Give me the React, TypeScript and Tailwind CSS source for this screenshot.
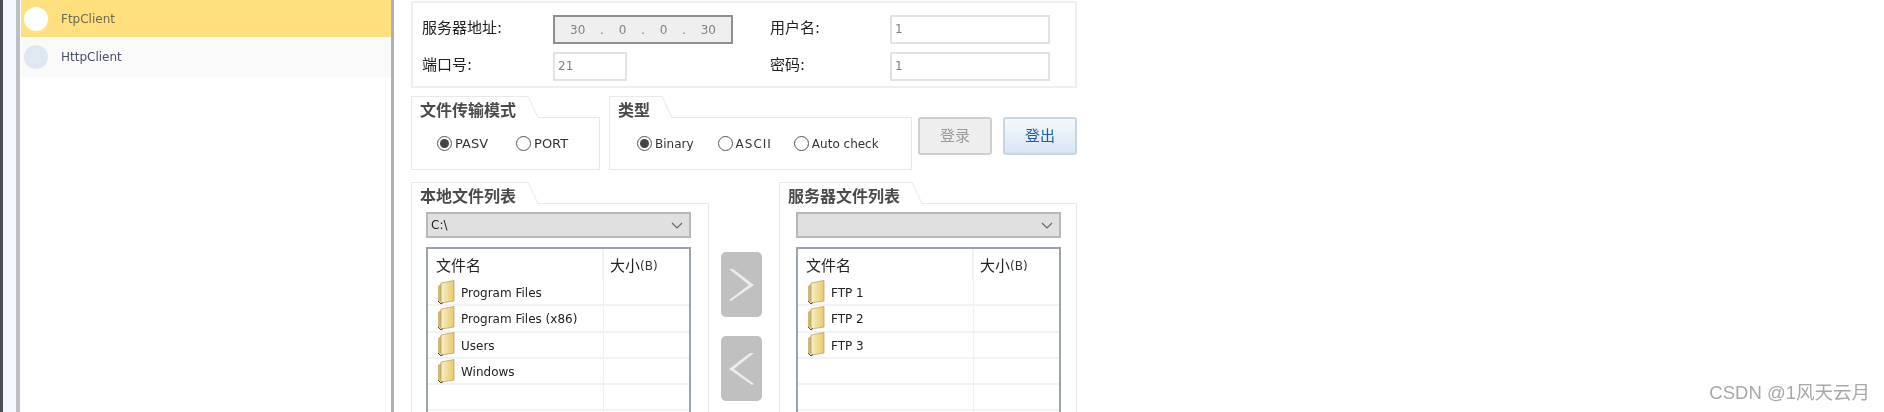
import type { ReactNode } from "react";

const font = "font-['DejaVu_Sans','Noto_Sans_CJK_SC',sans-serif]";

function Field({ w, children }: { w: string; children: ReactNode }) {
  return <div className={`${w} h-[29px] border-2 border-[#e2e2e2] bg-white pl-[3px] text-[12px] leading-[24px] text-[#808080]`}>{children}</div>;
}

function GroupBox({ title, tabWidth, className, bodyClass, children }: { title: string; tabWidth: string; className: string; bodyClass: string; children: ReactNode }) {
  return (
    <section className={`flex flex-col ${className}`}>
      <div className="flex h-[22px] shrink-0">
        <div className={`${tabWidth} whitespace-nowrap border-l border-t border-[#e8e8e8] pl-[8px] pt-[5px] text-[16px] leading-[18px] font-bold text-[#4a4a4a]`}>{title}</div>
        <svg width="15" height="22" viewBox="0 0 15 22" className="shrink-0"><path d="M0 .5 L3 .5 L13 21.5 L15 21.5" fill="none" stroke="#e8e8e8" /></svg>
        <div className="flex-1 border-b border-[#e8e8e8]" />
      </div>
      <div className={`flex-1 border-x border-b border-[#e8e8e8] ${bodyClass}`}>{children}</div>
    </section>
  );
}

function Radio({ label, on, gap, text = "text-[12px]" }: { label: string; on?: boolean; gap: string; text?: string }) {
  return (
    <div className={`flex items-center gap-[3px] ${gap}`}>
      <span className="flex h-[15px] w-[15px] items-center justify-center rounded-full border border-[#555] bg-white">
        {on && <span className="h-[9px] w-[9px] rounded-full bg-[#444]" />}
      </span>
      <span className={`${text} text-[#333]`}>{label}</span>
    </div>
  );
}

function Folder() {
  return (
    <svg width="18" height="25" viewBox="0 0 18 25" className="shrink-0">
      <defs>
        <linearGradient id="fg" x1="0" x2="1" y1="0" y2="0">
          <stop offset="0" stopColor="#f8efc4" />
          <stop offset="1" stopColor="#e9c96c" />
        </linearGradient>
      </defs>
      <path d="M1 21 V6 L4 4 V22 Z" fill="#cdb878" />
      <path d="M4 3 L17 0.5 V21 L4 23 Z" fill="url(#fg)" stroke="#b09a60" strokeWidth=".7" />
      <path d="M1 21 L4 24 L6 22.5" fill="none" stroke="#5a4a20" strokeWidth="1" />
    </svg>
  );
}

function FileList({ title, tabWidth, className, bodyClass, path, items }: { title: string; tabWidth: string; className: string; bodyClass: string; path: string; items: string[] }) {
  const rows = Array.from({ length: 6 }, (_, i) => items[i] ?? "");
  return (
    <GroupBox title={title} tabWidth={tabWidth} className={className} bodyClass={bodyClass}>
      <div className="flex h-[26px] items-center justify-between border-2 border-[#b8b8b8] bg-[#e0e0e0] pl-[3px] pr-[6px] text-[12px] text-[#222]">
        <span>{path}</span>
        <svg width="12" height="7" viewBox="0 0 12 7"><path d="M1 1 L6 6 L11 1" fill="none" stroke="#666" strokeWidth="1.2" /></svg>
      </div>
      <div className="mt-[9px] h-[200px] border-2 border-[#9aa3ab] bg-white">
        <div className="flex h-[31px] text-[15px] text-[#222]">
          <div className="flex w-[176px] items-center border-r-2 border-[#f0f0f0] pl-[8px] pt-[3px]">文件名</div>
          <div className="flex items-center pl-[6px] pt-[3px]">大小<span className="text-[12px] text-[#333]">(B)</span></div>
        </div>
        {rows.map((r, i) => (
          <div key={i} className="flex h-[26.3px] border-b-2 border-[#f2f2f2] text-[12px] text-[#222]">
            <div className="flex w-[176px] items-center gap-[6px] border-r border-[#f0f0f0] pl-[9px]">
              {r && <Folder />}
              <span className="pt-[2px]">{r}</span>
            </div>
          </div>
        ))}
      </div>
    </GroupBox>
  );
}

function Arrow({ dir }: { dir: "l" | "r" }) {
  return (
    <div className="flex h-[65px] w-[41px] items-center justify-center rounded-[5px] bg-[#c0c0c0]">
      <svg width="25" height="32" viewBox="0 0 25 32">
        <path d={dir === "r" ? "M0 0 L4 0 L25 16 L2 32 L0 31 L20 16 Z" : "M25 0 L21 0 L0 16 L23 32 L25 31 L5 16 Z"} fill="#ececec" />
      </svg>
    </div>
  );
}

export default function App() {
  return (
    <div className={`relative flex h-[412px] w-[1884px] overflow-hidden bg-white blur-[0.4px] ${font}`}>
      <aside className="flex h-full w-[394px] shrink-0 border-l-[3px] border-[#4a5058] bg-[#f5f9fe] pl-[13px]">
        <div className="h-full w-[378px] border-l-[4px] border-r-[3px] border-l-[#bcc0c4] border-r-[#adb2b8] bg-white pl-[1px]">
          <div className="flex h-[37px] items-center bg-[#ffdf7e] pl-[3px] text-[12px] text-[#6b6b55]">
            <span className="h-[24px] w-[24px] rounded-full bg-white" />
            <span className="ml-[13px]">FtpClient</span>
          </div>
          <div className="flex h-[40px] items-center bg-[#fafafa] pl-[3px] text-[12px] text-[#4a5068]">
            <span className="h-[24px] w-[24px] rounded-full bg-[#dfe8f2]" />
            <span className="ml-[13px]">HttpClient</span>
          </div>
        </div>
      </aside>

      <main className="flex w-[683px] flex-col pl-[17px] text-[#222]">
        <div className="mt-[1px] h-[87px] w-[666px] shrink-0 border-2 border-[#efefef] pl-[9px] pt-[12px] text-[15px]">
          <div className="grid grid-cols-[131px_180px_37px_120px_160px] grid-rows-[29px_29px] gap-y-[8px] items-center">
            <span className="pb-[3px]">服务器地址:</span>
            <div className="flex h-[29px] items-center justify-between border-2 border-[#8f8f8f] bg-[#efefef] px-[15px] text-[12px] text-[#808080]">
              <span>30</span><span>.</span><span>0</span><span>.</span><span>0</span><span>.</span><span>30</span>
            </div>
            <span />
            <span className="pb-[3px]">用户名:</span>
            <Field w="w-[160px]">1</Field>
            <span className="pb-[2px]">端口号:</span>
            <Field w="w-[74px]">21</Field>
            <span />
            <span className="pb-[2px]">密码:</span>
            <Field w="w-[160px]">1</Field>
          </div>
        </div>

        <div className="mt-[8px] flex h-[74px] w-[666px] shrink-0">
          <GroupBox title="文件传输模式" tabWidth="w-[114px]" className="w-[189px]" bodyClass="flex items-center">
            <Radio on label="PASV" gap="ml-[25px]" text="text-[13px]" />
            <Radio label="PORT" gap="ml-[28px]" text="text-[13px]" />
          </GroupBox>
          <GroupBox title="类型" tabWidth="w-[50px]" className="ml-[9px] w-[303px]" bodyClass="flex items-center">
            <Radio on label="Binary" gap="ml-[27px]" />
            <Radio label="ASCII" gap="ml-[24px]" text="text-[12px] tracking-[1px]" />
            <Radio label="Auto check" gap="ml-[22px]" />
          </GroupBox>
          <div className="ml-[6px] mt-[21px] flex h-[38px] gap-[11px] text-[15px]">
            <button className="w-[74px] rounded-[3px] border-2 border-[#cfcfcf] bg-[#eeeeee] text-[#9a9a9a]">登录</button>
            <button className="w-[74px] rounded-[3px] border-2 border-[#c8d6e4] bg-gradient-to-b from-[#f4f8fc] to-[#d8e6f4] text-[#1c5fa8]">登出</button>
          </div>
        </div>

        <div className="mt-[12px] flex h-[240px] w-[666px] shrink-0">
          <FileList title="本地文件列表" tabWidth="w-[114px]" className="w-[298px]" bodyClass="pl-[14px] pr-[17px] pt-[8px]" path="C:\" items={["Program Files", "Program Files (x86)", "Users", "Windows"]} />
          <div className="ml-[12px] mt-[70px] flex flex-col gap-[19px]">
            <Arrow dir="r" />
            <Arrow dir="l" />
          </div>
          <FileList title="服务器文件列表" tabWidth="w-[130px]" className="ml-[17px] w-[298px]" bodyClass="pl-[16px] pr-[15px] pt-[8px]" path="" items={["FTP 1", "FTP 2", "FTP 3"]} />
        </div>
      </main>

      <div className="absolute bottom-[7px] right-[14px] font-['Liberation_Sans','Noto_Sans_CJK_SC',sans-serif] text-[18.5px] leading-[24px] text-[#a8a8a8]">CSDN @1风天云月</div>
    </div>
  );
}
